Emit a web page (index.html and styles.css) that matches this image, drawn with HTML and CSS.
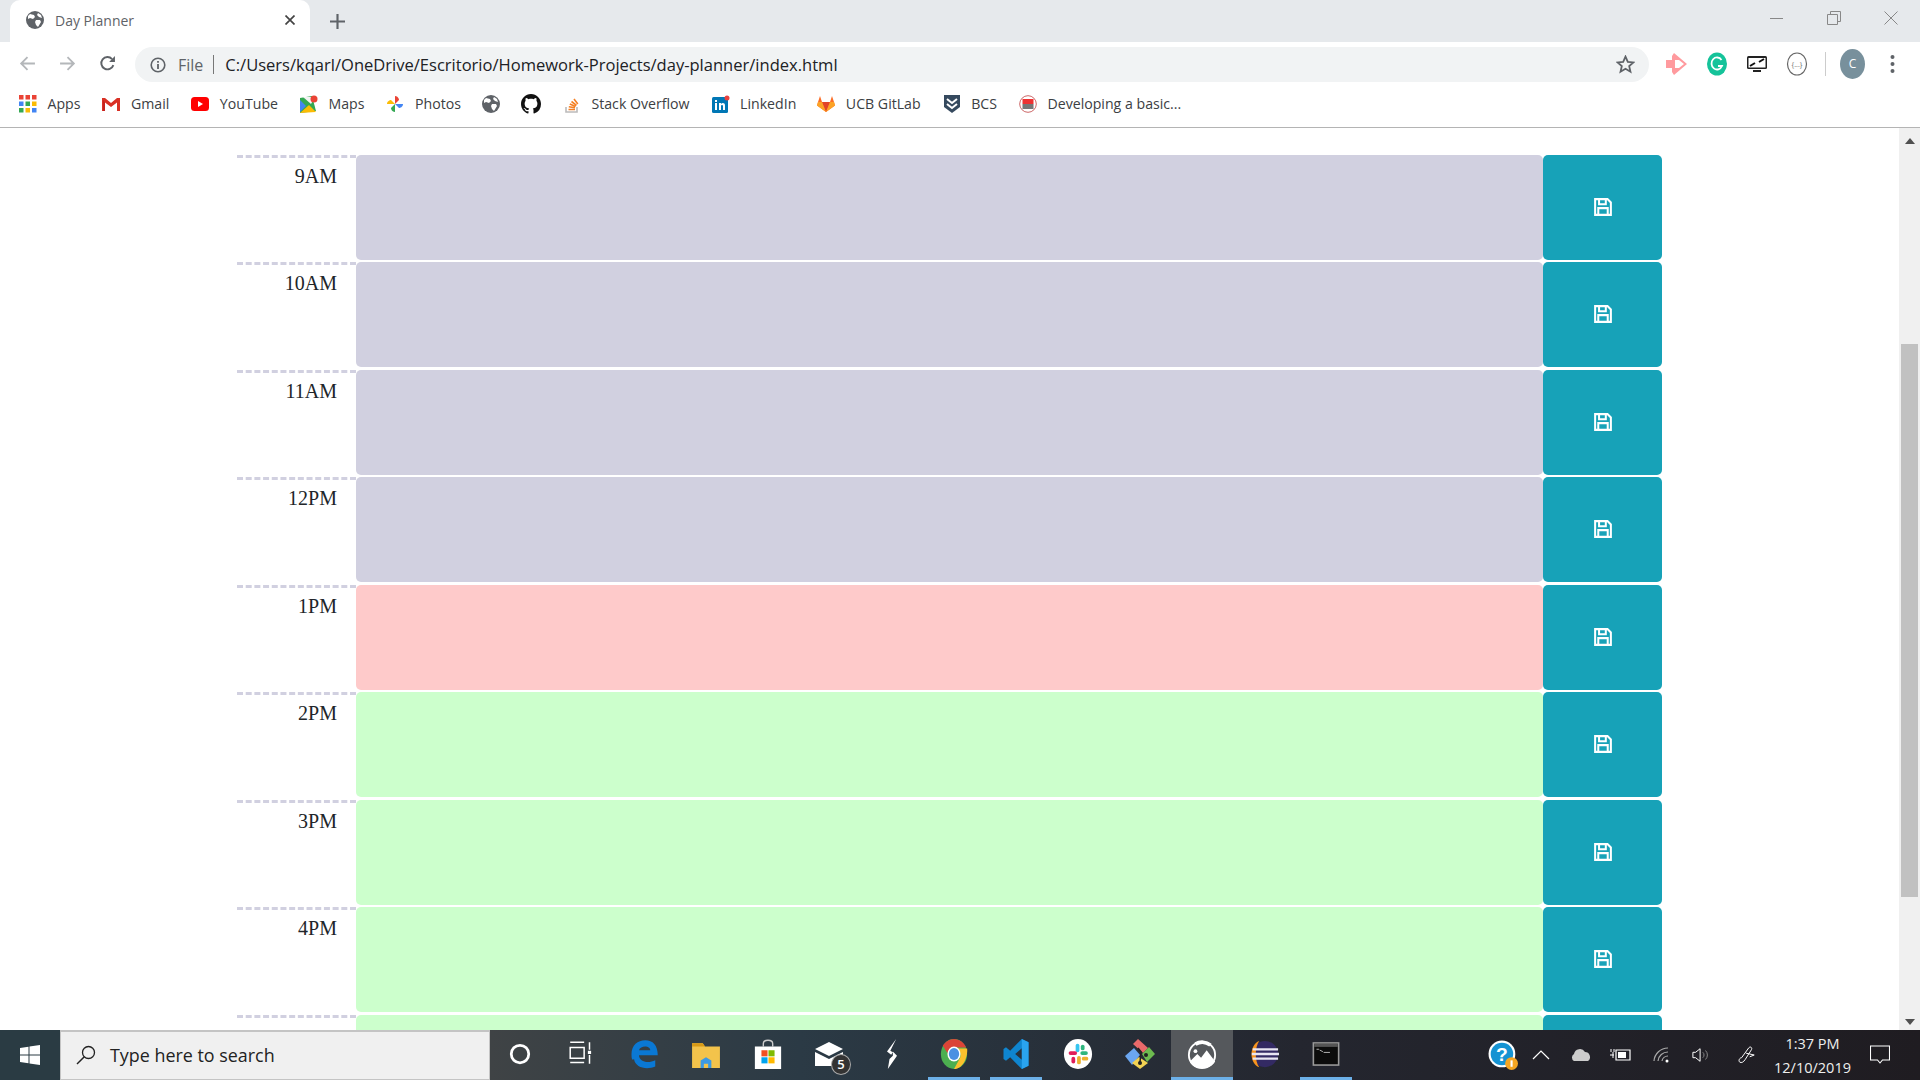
FILE: index.html
```html
<!DOCTYPE html>
<html>

<head>
    <title>Day Planner</title>
    <link rel="stylesheet" href="styles.css">
</head>

<body>
    <div class="tabstrip">
        <div class="tab">
            <svg class="tab-icon" viewBox="0 0 18 18"><circle cx="9" cy="9" r="9" fill="#5f6368"/><path d="M4 3l4 1 1 2-2 2-3-1-2 1 0-3zM10 9l4 0 1 2-3 5-2-2-1-3zM12 2l3 2 1 3-3-1-2-2z" fill="#fff"/></svg>
            <span class="tab-title">Day Planner</span>
            <svg class="tab-close" viewBox="0 0 10 10"><path d="M0.5 0.5l9 9M9.5 0.5l-9 9" stroke="#444" stroke-width="1.7"/></svg>
        </div>
        <svg class="new-tab" viewBox="0 0 14 14"><path d="M7 0v14M0 7h14" stroke="#5f6368" stroke-width="2"/></svg>
        <div class="window-controls">
            <svg viewBox="0 0 14 14"><path d="M0 7.5h13" stroke="#888" stroke-width="1"/></svg>
            <svg viewBox="0 0 14 14"><path d="M.5 3.5h10v10H.5zM3.500 3.500V.5h10v10h-3" fill="none" stroke="#888" stroke-width="1"/></svg>
            <svg viewBox="0 0 14 14"><path d="M.5.5l13 13M13.500.5l-13 13" stroke="#888" stroke-width="1"/></svg>
        </div>
    </div>

    <div class="toolbar">
        <svg class="nav-icon" viewBox="0 0 16 16"><path d="M15 8H2M8 2L2 8l6 6" fill="none" stroke="#b4b7ba" stroke-width="1.7"/></svg>
        <svg class="nav-icon" viewBox="0 0 16 16"><path d="M1 8h13M8 2l6 6-6 6" fill="none" stroke="#b4b7ba" stroke-width="1.7"/></svg>
        <svg class="nav-icon" viewBox="0 0 16 16"><path d="M13.500 9.500A5.800 5.800 0 1 1 12.300 3.800" fill="none" stroke="#5f6368" stroke-width="1.800"/><path d="M9.500 6.500H15V1z" fill="#5f6368"/></svg>
        <div class="omnibox">
            <svg class="info-icon" viewBox="0 0 16 16"><circle cx="8" cy="8" r="6.800" fill="none" stroke="#5f6368" stroke-width="1.600"/><path d="M8 7v5M8 4v1.800" stroke="#5f6368" stroke-width="1.800"/></svg>
            <span class="scheme">File</span>
            <span class="scheme-sep"></span>
            <span class="url">C:/Users/kqarl/OneDrive/Escritorio/Homework-Projects/day-planner/index.html</span>
            <svg class="star-icon" viewBox="0 0 18 18"><path d="M9 1.500l2.200 5 5.300.5-4 3.600 1.200 5.300L9 13.100l-4.700 2.800 1.200-5.300-4-3.600 5.300-.5z" fill="none" stroke="#5f6368" stroke-width="1.700"/></svg>
        </div>
        <div class="extensions">
            <svg viewBox="0 0 22 24"><path d="M0 8h6V4l2-3 13 11L8 23l-2-3v-4H0z" fill="#ff9a9e"/><path d="M9 8h4l5 4-5 4H9z" fill="#fff"/></svg>
            <svg viewBox="0 0 22 24"><ellipse cx="11" cy="12" rx="10" ry="11.500" fill="#15c39a"/><path d="M15.500 8A5.500 6 0 1 0 16 14h-4" fill="none" stroke="#fff" stroke-width="1.800"/></svg>
            <svg viewBox="0 0 22 24"><rect x="1" y="4" width="20" height="13" rx="1.500" fill="#222"/><rect x="2.500" y="6" width="17" height="9.500" fill="#fff"/><path d="M4 14l5-3M18 7l-5 3" stroke="#111" stroke-width="2"/><path d="M7 19h8" stroke="#222" stroke-width="2"/></svg>
            <svg viewBox="0 0 22 24"><ellipse cx="11" cy="12" rx="9.500" ry="11" fill="none" stroke="#666" stroke-width="1.200"/><text x="11" y="14.500" class="ext-dots">{...}</text></svg>
        </div>
        <span class="toolbar-sep"></span>
        <div class="avatar">C</div>
        <svg class="menu-icon" viewBox="0 0 4 20"><circle cx="2" cy="3" r="2" fill="#5f6368"/><circle cx="2" cy="10" r="2" fill="#5f6368"/><circle cx="2" cy="17" r="2" fill="#5f6368"/></svg>
    </div>

    <div class="bookmarks">
        <a class="bookmark apps"><svg viewBox="0 0 18 18"><rect x="0" y="0" width="4.500" height="4.500" fill="#ea4335"/><rect x="6.500" y="0" width="4.500" height="4.500" fill="#ea4335"/><rect x="13" y="0" width="4.500" height="4.500" fill="#ea4335"/><rect x="0" y="6.500" width="4.500" height="4.500" fill="#4285f4"/><rect x="6.500" y="6.500" width="4.500" height="4.500" fill="#34a853"/><rect x="13" y="6.500" width="4.500" height="4.500" fill="#fbbc05"/><rect x="0" y="13" width="4.500" height="4.500" fill="#34a853"/><rect x="6.500" y="13" width="4.500" height="4.500" fill="#fbbc05"/><rect x="13" y="13" width="4.500" height="4.500" fill="#4285f4"/></svg>Apps</a>
        <a class="bookmark"><svg viewBox="0 0 18 18"><path d="M0 3h3l6 5 6-5h3v13h-3V7.500L9 12 3 7.500V16H0z" fill="#d93025"/><path d="M3 7.500V16H1V5z" fill="#c5221f"/></svg>Gmail</a>
        <a class="bookmark"><svg viewBox="0 0 18 18"><rect x="0" y="2" width="18" height="14" rx="3.500" fill="#f00"/><path d="M7 6l5 3-5 3z" fill="#fff"/></svg>YouTube</a>
        <a class="bookmark"><svg viewBox="0 0 18 18"><path d="M0 3l12-2 4 15-16 2z" fill="#34a853"/><path d="M0 18l9-8 7 7z" fill="#fbbc05"/><path d="M0 5l6 6-6 6z" fill="#4285f4"/><path d="M3 2l8 7 4-7z" fill="#f3f3f3"/><circle cx="14" cy="4" r="3.500" fill="#ea4335"/></svg>Maps</a>
        <a class="bookmark"><svg viewBox="0 0 18 18"><path d="M9 9V1c3 0 4 3 4 4z" fill="#ea4335"/><path d="M9 9h8c0 3-3 4-4 4z" fill="#4285f4"/><path d="M9 9v8c-3 0-4-3-4-4z" fill="#34a853"/><path d="M9 9H1c0-3 3-4 4-4z" fill="#fbbc05"/></svg>Photos</a>
        <a class="bookmark globe"><svg viewBox="0 0 18 18"><circle cx="9" cy="9" r="9" fill="#5f6368"/><path d="M4 3l4 1 1 2-2 2-3-1-2 1 0-3zM10 9l4 0 1 2-3 5-2-2-1-3zM12 2l3 2 1 3-3-1-2-2z" fill="#fff"/></svg></a>
        <a class="bookmark github"><svg viewBox="0 0 16 16"><path fill="#111" d="M8 0C3.580 0 0 3.580 0 8c0 3.540 2.290 6.530 5.470 7.590.4.070.55-.17.55-.38 0-.19-.01-.82-.01-1.490-2.010.37-2.530-.49-2.690-.94-.09-.23-.48-.94-.82-1.130-.28-.15-.68-.52-.01-.53.63-.01 1.080.58 1.230.82.720 1.210 1.870.87 2.330.66.070-.52.280-.87.510-1.070-1.780-.2-3.640-.89-3.640-3.950 0-.87.310-1.590.82-2.150-.08-.2-.36-1.020.08-2.120 0 0 .67-.21 2.200.82.640-.18 1.320-.27 2-.27s1.360.09 2 .27c1.530-1.040 2.200-.82 2.200-.82.44 1.100.16 1.920.08 2.120.51.560.82 1.270.82 2.150 0 3.070-1.870 3.750-3.650 3.950.29.250.54.730.54 1.480 0 1.070-.01 1.930-.01 2.200 0 .21.150.46.550.38A8.010 8.010 0 0 0 16 8c0-4.420-3.580-8-8-8z"/></svg></a>
        <a class="bookmark"><svg viewBox="0 0 18 18"><path d="M3 12v5h11v-5" fill="none" stroke="#bcbbbb" stroke-width="1.600"/><path d="M5.500 14.500h6.500M5.800 11.800l6.200 1M6.800 9l5.800 2.500M8.500 6.500l5 3.800M11 4l3.800 5" stroke="#f48024" stroke-width="1.600" fill="none"/></svg>Stack Overflow</a>
        <a class="bookmark"><svg viewBox="0 0 18 18"><rect x="0" y="2" width="16" height="16" rx="1.500" fill="#0077b5"/><path d="M3 8h2v7H3zM3 5h2v2H3zM7 8h2v1c1-1.500 4-1.500 4 1.500V15h-2v-4c0-1.500-2-1.500-2 0v4H7z" fill="#fff"/><circle cx="15" cy="3" r="2.500" fill="#e8413e"/></svg>LinkedIn</a>
        <a class="bookmark gitlab"><svg viewBox="0 0 18 18"><path d="M9 17L0 10.500 1 7l2-6 2 6h8l2-6 2 6 1 3.500z" fill="#fc6d26"/><path d="M9 17L5 7h8z" fill="#e24329"/><path d="M9 17L0 10.500 1 7h4zM9 17l9-6.500L17 7h-4z" fill="#fca326"/></svg>UCB GitLab</a>
        <a class="bookmark"><svg viewBox="0 0 18 18"><path d="M1 0h16v12l-8 6-8-6z" fill="#35495e"/><path d="M4 4l5 4 5-4M4 9l5 4 5-4" fill="none" stroke="#fff" stroke-width="2"/></svg>BCS</a>
        <a class="bookmark"><svg viewBox="0 0 18 18"><circle cx="9" cy="9" r="8.300" fill="#fff" stroke="#c66" stroke-width="1"/><rect x="3.500" y="4" width="11" height="5" fill="#e33"/><rect x="3.500" y="9" width="11" height="5" fill="#777"/></svg>Developing a basic...</a>
    </div>

    <div class="viewport">
        <div class="planner">
            <div class="time-block">
                <div class="hour">9AM</div>
                <div class="description past"></div>
                <button class="saveBtn"><svg viewBox="0 0 16 16"><path d="M1 1h11l3 3v11H1zM4.500 1.500v4h6v-4M3.800 15V9h8.400v6" fill="none" stroke="#fff" stroke-width="1.800"/></svg></button>
            </div>
            <div class="time-block">
                <div class="hour">10AM</div>
                <div class="description past"></div>
                <button class="saveBtn"><svg viewBox="0 0 16 16"><path d="M1 1h11l3 3v11H1zM4.500 1.500v4h6v-4M3.800 15V9h8.400v6" fill="none" stroke="#fff" stroke-width="1.800"/></svg></button>
            </div>
            <div class="time-block">
                <div class="hour">11AM</div>
                <div class="description past"></div>
                <button class="saveBtn"><svg viewBox="0 0 16 16"><path d="M1 1h11l3 3v11H1zM4.500 1.500v4h6v-4M3.800 15V9h8.400v6" fill="none" stroke="#fff" stroke-width="1.800"/></svg></button>
            </div>
            <div class="time-block">
                <div class="hour">12PM</div>
                <div class="description past"></div>
                <button class="saveBtn"><svg viewBox="0 0 16 16"><path d="M1 1h11l3 3v11H1zM4.500 1.500v4h6v-4M3.800 15V9h8.400v6" fill="none" stroke="#fff" stroke-width="1.800"/></svg></button>
            </div>
            <div class="time-block">
                <div class="hour">1PM</div>
                <div class="description present"></div>
                <button class="saveBtn"><svg viewBox="0 0 16 16"><path d="M1 1h11l3 3v11H1zM4.500 1.500v4h6v-4M3.800 15V9h8.400v6" fill="none" stroke="#fff" stroke-width="1.800"/></svg></button>
            </div>
            <div class="time-block">
                <div class="hour">2PM</div>
                <div class="description future"></div>
                <button class="saveBtn"><svg viewBox="0 0 16 16"><path d="M1 1h11l3 3v11H1zM4.500 1.500v4h6v-4M3.800 15V9h8.400v6" fill="none" stroke="#fff" stroke-width="1.800"/></svg></button>
            </div>
            <div class="time-block">
                <div class="hour">3PM</div>
                <div class="description future"></div>
                <button class="saveBtn"><svg viewBox="0 0 16 16"><path d="M1 1h11l3 3v11H1zM4.500 1.500v4h6v-4M3.800 15V9h8.400v6" fill="none" stroke="#fff" stroke-width="1.800"/></svg></button>
            </div>
            <div class="time-block">
                <div class="hour">4PM</div>
                <div class="description future"></div>
                <button class="saveBtn"><svg viewBox="0 0 16 16"><path d="M1 1h11l3 3v11H1zM4.500 1.500v4h6v-4M3.800 15V9h8.400v6" fill="none" stroke="#fff" stroke-width="1.800"/></svg></button>
            </div>
            <div class="time-block">
                <div class="hour"></div>
                <div class="description future"></div>
                <button class="saveBtn"></button>
            </div>
        </div>
        <div class="scrollbar">
            <span class="arrow-up"></span>
            <div class="thumb"></div>
            <span class="arrow-down"></span>
        </div>
    </div>

    <div class="taskbar">
        <div class="start">
            <svg viewBox="0 0 20 20"><path d="M0 3l8.500-1.200V9.500H0zM9.500 1.600L20 0v9.500H9.500zM0 10.500h8.500v7.700L0 17zM9.500 10.500H20V20L9.500 18.400z" fill="#fff"/></svg>
        </div>
        <div class="search">
            <svg viewBox="0 0 20 20"><circle cx="12.500" cy="7.500" r="6" fill="none" stroke="#222" stroke-width="1.300"/><path d="M8.300 11.800L1 19" stroke="#222" stroke-width="1.500"/></svg>
            <span>Type here to search</span>
        </div>
        <div class="task-icons">
            <div class="task"><svg viewBox="0 0 24 24"><circle cx="12" cy="12" r="7" fill="none" stroke="#fff" stroke-width="2.200"/></svg></div>
            <div class="task"><svg viewBox="0 -1 28 28"><path d="M3 2h13M3 21h13M3 7h13v10H3zM21 2v7M21 14v8" fill="none" stroke="#fff" stroke-width="1.400"/><rect x="19.500" y="10" width="3" height="3" fill="#fff"/></svg></div>
            <div class="task"><svg viewBox="0 0 24 24"><path d="M2 12C2 5 7 1 13 1c6 0 10 4 10 12H8c0 5 7 7 13 4v5c-7 3-16 1-17-6-1 1-2 1-2-4zM8 9h9c0-4-8-4-9 0z" fill="#0a78d4"/></svg></div>
            <div class="task"><svg viewBox="0 0 28 28"><path d="M1 4h10l2 3h14v20H1z" fill="#f3c34b"/><path d="M1 4h10l2 3H1z" fill="#d89a16"/><path d="M9 27v-7l5-3 5 3v7h-3v-4h-4v4z" fill="#3d9ae3"/></svg></div>
            <div class="task"><svg viewBox="0 0 28 32"><path d="M9 8V5c0-5 10-5 10 0v3" fill="none" stroke="#ccc" stroke-width="1.500"/><rect x="0" y="8" width="28" height="24" fill="#fff"/><rect x="7" y="12" width="6.500" height="6.500" fill="#f25022"/><rect x="14.500" y="12" width="6.500" height="6.500" fill="#7fba00"/><rect x="7" y="19.500" width="6.500" height="6.500" fill="#00a4ef"/><rect x="14.500" y="19.500" width="6.500" height="6.500" fill="#ffb900"/></svg></div>
            <div class="task mail">
                <svg viewBox="0 0 30 24"><path d="M0 7l14-7 14 7-14 7zM0 10l14 7 14-7v14H0z" fill="#fff"/></svg>
                <span class="badge">5</span>
            </div>
            <div class="task"><svg viewBox="0 0 14 36"><path d="M12 0L1 15l5 4 2-3-3-2zM8 15l5 5L2 36l2-12 4-4z" fill="#fff"/></svg></div>
            <div class="task running"><svg viewBox="0 0 28 32"><ellipse cx="14" cy="16" rx="14" ry="16" fill="#4caf50"/><path d="M14 0c6 0 11 4 13 9H14c-3 0-6 2-7 6L2 7c3-4 7-7 12-7z" fill="#db4437"/><path d="M28 10c1 8-4 22-14 22l6-11c2-3 1-8-2-11z" fill="#fbc02d"/><ellipse cx="14" cy="16" rx="7" ry="8" fill="#fff"/><ellipse cx="14" cy="16" rx="5.500" ry="6.300" fill="#4a90e2"/></svg></div>
            <div class="task running"><svg viewBox="0 0 30 36"><path d="M22 0l8 4v28l-8 4-14-14-5 4-3-2v-12l3-2 5 4zM22 11l-8 7 8 7z" fill="#0f85cf"/><path d="M22 0l8 4v28l-8 4z" fill="#2aa4ef"/></svg></div>
            <div class="task"><svg viewBox="0 0 30 32"><ellipse cx="15" cy="16" rx="15" ry="16" fill="#fff"/><rect x="12.500" y="5" width="4" height="9" rx="2" fill="#36c5f0"/><rect x="17.500" y="13" width="8" height="4" rx="2" fill="#2eb67d"/><rect x="18" y="6" width="4" height="6" rx="2" fill="#2eb67d"/><rect x="5" y="13" width="9" height="4" rx="2" fill="#e01e5a"/><rect x="8" y="19" width="4" height="7" rx="2" fill="#e01e5a"/><rect x="14" y="18" width="4" height="9" rx="2" fill="#ecb22e"/><rect x="19" y="19" width="7" height="4" rx="2" fill="#ecb22e"/></svg></div>
            <div class="task"><svg viewBox="0 0 30 30"><path d="M0 17l9-8 6 7-8 10z" fill="#6ba6f0"/><path d="M8 5l5-5 10 9-5 5z" fill="#e96a6a"/><path d="M17 15l7-7 6 7-8 8z" fill="#6dbb4f"/><path d="M7 24l7-6 9 6-8 6z" fill="#f3d353"/><path d="M16 13l-1 10M13 9l4 5" stroke="#222" stroke-width="1.500"/><circle cx="21" cy="16" r="2" fill="#222"/><circle cx="15" cy="24" r="2" fill="#222"/></svg></div>
            <div class="task running active"><svg viewBox="0 0 32 32"><circle cx="16" cy="17" r="14" fill="none" stroke="#fff" stroke-width="2"/><path d="M9 5.500A14 14 0 0 1 25 6.500" fill="none" stroke="#fff" stroke-width="4"/><path d="M3 24l8-8 4 4 6-8 9 12c-3 5-8 7-14 7S6 29 3 24z" fill="#fff"/><circle cx="9" cy="13" r="2" fill="#fff"/></svg></div>
            <div class="task"><svg viewBox="0 0 32 32"><circle cx="17" cy="16" r="14" fill="#332a63"/><path d="M11 2C0 6 0 26 11 30 6 24 6 8 11 2z" fill="#f7941e"/><path d="M4 11h27M3 16h29M4 21h27" stroke="#e8e6f2" stroke-width="2.500"/></svg></div>
            <div class="task running"><svg viewBox="-3 -4 38 36"><rect x="0" y="0" width="32" height="28" fill="#0c0c0c" stroke="#9a9a9a" stroke-width="2"/><rect x="1" y="1" width="30" height="4" fill="#555"/><path d="M4 8h3M8 9l4 2M13 12h8" fill="none" stroke="#bbb" stroke-width="1.200"/></svg></div>
        </div>
        <div class="tray">
            <svg class="help-icon" viewBox="0 0 28 28"><circle cx="13" cy="13" r="12.500" fill="#fff"/><circle cx="13" cy="13" r="10.500" fill="#1593d3"/><text x="13" y="19.500" class="help-mark">?</text><circle cx="22" cy="22" r="6" fill="#f5a623"/><path d="M22 19v6" stroke="#fff" stroke-width="2"/></svg>
            <svg class="tray-icon chevron" viewBox="0 0 18 18"><path d="M1 13l8-8 8 8" fill="none" stroke="#fff" stroke-width="1.200"/></svg>
            <svg class="tray-icon wide cloud" viewBox="0 0 22 18"><path d="M4 15a4 4 0 0 1 0-7 6 6 0 0 1 11-2 5 5 0 0 1 3 9z" fill="#ccc"/></svg>
            <svg class="tray-icon wide" viewBox="0 0 22 18"><path d="M6 4h14v10H6z" fill="none" stroke="#fff" stroke-width="1.200"/><rect x="8" y="6" width="8" height="6" fill="#fff"/><path d="M0 9h4M3 6v6M1 3v3M4 3v3" stroke="#fff" stroke-width="1"/></svg>
            <svg class="tray-icon" viewBox="0 0 18 18"><path d="M1 15A14 14 0 0 1 15 2M5 15A10 10 0 0 1 15 6M9 15a6 6 0 0 1 6-5" fill="none" stroke="#aaa" stroke-width="1.200"/><circle cx="14" cy="15" r="1.500" fill="#fff"/></svg>
            <svg class="tray-icon" viewBox="0 0 20 18"><path d="M1 6h3l5-4v14l-5-4H1z" fill="none" stroke="#fff" stroke-width="1.100"/><path d="M12 6a4 4 0 0 1 0 6M15 4a7 7 0 0 1 0 10" fill="none" stroke="#888" stroke-width="1.100"/></svg>
            <svg class="tray-icon pen" viewBox="0 0 20 20"><path d="M2 18c-2-2 0-5 2-5l8-11c2-2 4 0 3 2L8 15c-2 3-4 4-6 3zM9 8l9 2-5 2" fill="none" stroke="#fff" stroke-width="1.100"/></svg>
            <div class="clock">
                <span>1:37 PM</span>
                <span>12/10/2019</span>
            </div>
            <svg class="notify-icon" viewBox="0 0 20 20"><path d="M.5 1h19v14h-7l-2.500 3-2.500-3h-7z" fill="none" stroke="#fff" stroke-width="1.100"/></svg>
        </div>
    </div>
</body>

</html>
```

FILE: styles.css
```css
* {
    box-sizing: border-box;
}

html,
body {
    height: 100%;
}

body {
    margin: 0;
    height: 1080px;
    overflow: hidden;
    display: flex;
    flex-direction: column;
    background-color: #fff;
    font-family: "Open Sans", "Noto Sans", sans-serif;
    color: #3c4043;
}

/* browser tabs */
.tabstrip {
    height: 42px;
    flex: none;
    display: flex;
    align-items: flex-end;
    padding-left: 10px;
    background-color: #e6e9ec;
}

.tab {
    width: 300px;
    height: 42px;
    display: flex;
    align-items: center;
    padding: 0 15px 2px 16px;
    background-color: #fff;
    border-radius: 10px 10px 0 0;
}

.tab-icon {
    width: 18px;
    height: 18px;
}

.tab-title {
    flex: 1;
    margin-left: 11px;
    font-size: 14px;
    color: #5f6368;
}

.tab-close {
    width: 10px;
    height: 10px;
}

.new-tab {
    width: 15px;
    height: 15px;
    margin: 0 0 13px 20px;
}

.window-controls {
    margin-left: auto;
    height: 42px;
    display: flex;
    align-items: center;
    gap: 43px;
    padding: 0 22px 6px 0;
}

.window-controls svg {
    width: 14px;
    height: 14px;
}

/* address bar */
.toolbar {
    height: 40px;
    flex: none;
    display: flex;
    align-items: flex-end;
    padding-left: 19px;
}

.nav-icon {
    width: 17px;
    height: 17px;
    margin: 0 23px 10px 0;
}

.omnibox {
    width: 1514px;
    height: 35px;
    margin-left: -4px;
    display: flex;
    align-items: center;
    padding: 0 14px 0 15px;
    background-color: #f1f3f4;
    border-radius: 18px;
}

.info-icon {
    width: 16px;
    height: 16px;
}

.scheme {
    margin-left: 12px;
    font-size: 16px;
    color: #5f6368;
}

.scheme-sep {
    width: 1px;
    height: 19px;
    margin: 0 11px 0 10px;
    background-color: #777;
}

.url {
    flex: 1;
    font-size: 16.550px;
    color: #202124;
}

.star-icon {
    width: 19px;
    height: 19px;
}

.extensions {
    display: flex;
    gap: 18px;
    margin: 0 0 6px 17px;
}

.extensions svg {
    width: 22px;
    height: 24px;
}

.ext-dots {
    font-size: 7px;
    text-anchor: middle;
    fill: #666;
}

.toolbar-sep {
    width: 1px;
    height: 24px;
    margin: 0 14px 6px 17px;
    background-color: #ccc;
}

.avatar {
    width: 25px;
    height: 30px;
    margin-bottom: 3px;
    border-radius: 50%;
    background-color: #78909c;
    color: #fff;
    font-size: 12px;
    text-align: center;
    line-height: 30px;
}

.menu-icon {
    width: 5px;
    height: 20px;
    margin: 0 0 8px 25px;
}

/* bookmarks bar */
.bookmarks {
    height: 46px;
    flex: none;
    display: flex;
    align-items: center;
    gap: 22px;
    padding: 0 0 2px 19px;
    border-bottom: 1px solid #b4b4b4;
}

.bookmark {
    display: flex;
    align-items: center;
    gap: 10.500px;
    font-size: 14.150px;
    color: #3c4043;
}

.bookmark svg {
    width: 18px;
    height: 18px;
}

.bookmark.globe {
    margin-left: -1px;
}

.bookmark.github {
    margin-left: -1px;
}

.bookmark.github svg {
    width: 20px;
    height: 20px;
}

.bookmark.gitlab {
    margin-left: -1px;
}

/* planner */
.viewport {
    flex: 1;
    min-height: 0;
    display: flex;
    overflow: hidden;
}

.planner {
    flex: 1;
    padding: 26.600px 0 0 237px;
}

.time-block {
    width: 1425px;
    height: 107.500px;
    display: grid;
    grid-template-columns: 119px 1187px 119px;
}

.hour {
    padding: 7px 19px 0 0;
    border-top: 3px dashed #d1d0e0;
    text-align: right;
    font-family: "Liberation Serif", serif;
    font-size: 20px;
    color: #212529;
}

.description {
    height: 105px;
    border-radius: 5px;
}

.past {
    background-color: #d1d0e0;
}

.present {
    background-color: #fecaca;
}

.future {
    background-color: #ccffcc;
}

.saveBtn {
    height: 105px;
    padding: 0 0 1px;
    border: none;
    border-radius: 5px;
    background-color: #17a2b8;
}

.saveBtn svg {
    width: 18px;
    height: 18px;
    display: block;
    margin: auto;
}

.scrollbar {
    width: 21px;
    flex: none;
    display: flex;
    flex-direction: column;
    align-items: center;
    background-color: #f0f0f0;
}

.arrow-up {
    margin-top: 10px;
    border: 5px solid transparent;
    border-top: none;
    border-bottom: 6px solid #505050;
}

.thumb {
    width: 17px;
    height: 553px;
    margin-top: 200px;
    background-color: #c1c1c1;
}

.arrow-down {
    margin-top: auto;
    margin-bottom: 5px;
    border: 5px solid transparent;
    border-bottom: none;
    border-top: 6px solid #505050;
}

/* windows taskbar */
.taskbar {
    height: 50px;
    flex: none;
    display: flex;
    background: linear-gradient(90deg, #2a3b43 0, #2a3b43 60px, #3f4345 490px, #2b3a45 800px, #24262f 1300px, #1f1c21 1920px);
}

.start {
    width: 60px;
    display: flex;
    align-items: center;
    justify-content: center;
}

.start svg {
    width: 20px;
    height: 20px;
}

.search {
    width: 430px;
    display: flex;
    align-items: center;
    padding: 0 0 2px 15px;
    background-color: #f0f0f0;
    border-top: 2px solid #c4c4c4;
    border-left: 1px solid #c4c4c4;
    border-right: 1px solid #c4c4c4;
    border-bottom: 1px solid #c4c4c4;
    font-size: 17.900px;
    color: #222;
}

.search svg {
    width: 20px;
    height: 20px;
    margin-right: 14px;
}

.task-icons {
    display: flex;
    margin-left: -1px;
}

.task {
    position: relative;
    width: 62px;
    height: 50px;
    display: flex;
    align-items: center;
    justify-content: center;
    padding-bottom: 2px;
}

.task svg {
    width: 30px;
    height: 30px;
}

.running::after {
    content: "";
    position: absolute;
    left: 5px;
    right: 5px;
    bottom: 0;
    height: 3px;
    background-color: #6cb0e8;
}

.active {
    background-color: #55585c;
}

.active::after {
    left: 0;
    right: 0;
}

.badge {
    position: absolute;
    left: 32px;
    top: 24px;
    width: 20px;
    height: 21px;
    border-radius: 50%;
    border: 1px solid #aaa;
    background-color: #333;
    color: #fff;
    font-size: 13px;
    font-weight: 600;
    text-align: center;
    line-height: 19px;
}

.tray {
    margin-left: auto;
    display: flex;
    align-items: center;
    padding-right: 30px;
    color: #eee;
}

.help-icon {
    width: 30px;
    height: 30px;
    margin-right: 14px;
}

.help-mark {
    font-family: "Liberation Sans", sans-serif;
    font-size: 18px;
    font-weight: 700;
    text-anchor: middle;
    fill: #fff;
}

.tray-icon {
    width: 18px;
    height: 18px;
    margin-right: 21px;
}

.tray-icon.chevron {
    margin-right: 20px;
}

.tray-icon.wide {
    width: 22px;
}

.tray-icon.cloud {
    margin-right: 18px;
}

.tray-icon.pen {
    margin-left: 7px;
    margin-right: 15px;
}

.clock {
    width: 84px;
    display: flex;
    flex-direction: column;
    align-items: center;
    padding-top: 2px;
    font-size: 14.500px;
    line-height: 24px;
    margin-right: 15.500px;
}

.notify-icon {
    width: 20px;
    height: 20px;
}
```
